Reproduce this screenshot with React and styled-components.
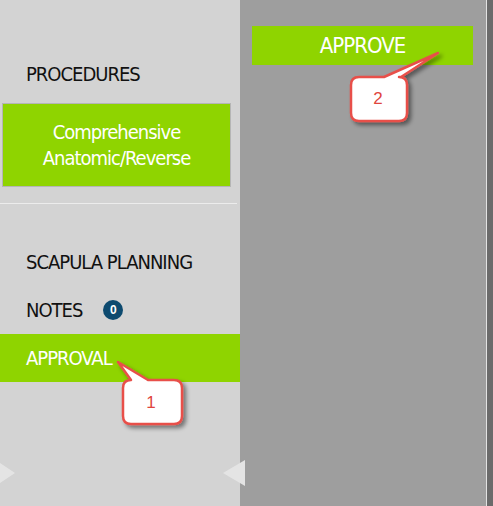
import React from "react";
import styled, { createGlobalStyle } from "styled-components";

const GlobalStyle = createGlobalStyle`
  html, body {
    margin: 0;
    padding: 0;
    width: 493px;
    height: 506px;
    overflow: hidden;
  }
  body {
    font-family: "DejaVu Sans Condensed", "Liberation Sans Narrow", sans-serif;
  }
`;

const Page = styled.div`
  position: relative;
  display: flex;
  width: 493px;
  height: 506px;
  background: #6b6b6b;
  overflow: hidden;
`;

const Sidebar = styled.div`
  flex: 0 0 240px;
  background: #d3d3d3;
  display: flex;
  flex-direction: column;
  padding-top: 59px;
  box-sizing: border-box;
`;

const Heading = styled.div`
  padding-left: 26px;
  font-size: 20px;
  line-height: 30px;
  letter-spacing: -1px;
  color: #111;
`;

const ProcedureBox = styled.div`
  margin: 14px 9px 0 2px;
  height: 84px;
  box-sizing: border-box;
  border: 1px solid #b5b5b5;
  background: #8fd400;
  color: #fff;
  display: flex;
  flex-direction: column;
  align-items: center;
  justify-content: center;
  font-size: 20px;
  line-height: 26px;
  letter-spacing: -1px;
`;

const Divider = styled.div`
  margin-top: 16px;
  width: 237px;
  height: 1px;
  background: #ececec;
`;

const NavList = styled.div`
  margin-top: 34px;
  display: flex;
  flex-direction: column;
`;

const NavItem = styled.div`
  height: 48px;
  display: flex;
  align-items: center;
  gap: 21px;
  padding-left: 26px;
  font-size: 20px;
  letter-spacing: -1px;
  color: ${(p) => (p.$active ? "#fff" : "#111")};
  background: ${(p) => (p.$active ? "#8fd400" : "transparent")};
`;

const Badge = styled.span`
  width: 20px;
  height: 20px;
  border-radius: 50%;
  background: #0d4a6f;
  color: #fff;
  font-family: "Liberation Sans", Arial, sans-serif;
  font-weight: bold;
  font-size: 12px;
  display: flex;
  align-items: center;
  justify-content: center;
  letter-spacing: 0;
`;

const Main = styled.div`
  flex: 0 0 234px;
  background: #9e9e9e;
  border-right: 1px solid #e2e2e2;
  padding: 26px 0 0 12px;
`;

const ApproveButton = styled.div`
  width: 221px;
  height: 39px;
  background: #8fd400;
  color: #fff;
  display: flex;
  align-items: center;
  justify-content: center;
  font-size: 22px;
  letter-spacing: -1px;
`;

const Overlay = styled.svg`
  position: absolute;
  left: 0;
  top: 0;
  width: 493px;
  height: 506px;
  pointer-events: none;
`;

const CalloutNumber = styled.span`
  position: absolute;
  left: ${(p) => p.$x}px;
  top: ${(p) => p.$y}px;
  transform: translate(-50%, -50%);
  font-family: "Liberation Sans", Arial, sans-serif;
  font-size: 17px;
  color: #e0453e;
`;

const Arrow = styled.div`
  position: absolute;
  left: ${(p) => p.$x}px;
  top: ${(p) => p.$y}px;
  width: 0;
  height: 0;
  border-top: ${(p) => p.$h / 2}px solid transparent;
  border-bottom: ${(p) => p.$h / 2}px solid transparent;
  ${(p) =>
    p.$dir === "right"
      ? `border-left: ${p.$w}px solid #e4e4e4;`
      : `border-right: ${p.$w}px solid #e4e4e4;`}
`;

// box corners with radius 8, tail from top edge up to the tip
const calloutPath = (tip, box, tail) => {
  const [x1, y1, x2, y2] = box;
  const r = 8;
  return `M ${tail[1]} ${y1} L ${tip[0]} ${tip[1]} L ${tail[0]} ${y1}
    L ${x1 + r} ${y1} Q ${x1} ${y1} ${x1} ${y1 + r}
    L ${x1} ${y2 - r} Q ${x1} ${y2} ${x1 + r} ${y2}
    L ${x2 - r} ${y2} Q ${x2} ${y2} ${x2} ${y2 - r}
    L ${x2} ${y1 + r} Q ${x2} ${y1} ${x2 - r} ${y1} Z`;
};

const callouts = [
  { n: 1, tip: [118, 362], box: [123, 380, 182, 424], tail: [131, 148], label: [151, 403] },
  { n: 2, tip: [438, 53], box: [351, 77, 407, 121], tail: [384, 401], label: [378, 99] },
];

const App = () => {
  return (
    <>
      <GlobalStyle />
      <Page>
        <Sidebar>
          <Heading>PROCEDURES</Heading>
          <ProcedureBox>
            <div>Comprehensive</div>
            <div>Anatomic/Reverse</div>
          </ProcedureBox>
          <Divider />
          <NavList>
            <NavItem>SCAPULA PLANNING</NavItem>
            <NavItem>
              NOTES <Badge>0</Badge>
            </NavItem>
            <NavItem $active>APPROVAL</NavItem>
          </NavList>
        </Sidebar>
        <Main>
          <ApproveButton>APPROVE</ApproveButton>
        </Main>

        <Arrow $x={0} $y={463} $w={15} $h={20} $dir="right" />
        <Arrow $x={223} $y={460} $w={22} $h={26} $dir="left" />

        <Overlay viewBox="0 0 493 506">
          <defs>
            <filter id="cs" x="-30%" y="-30%" width="160%" height="160%">
              <feDropShadow dx="3" dy="3" stdDeviation="2" floodColor="#000" floodOpacity="0.45" />
            </filter>
          </defs>
          {callouts.map((c) => (
            <path
              key={c.n}
              d={calloutPath(c.tip, c.box, c.tail)}
              fill="#fff"
              stroke="#e8504a"
              strokeWidth="2.5"
              strokeLinejoin="round"
              filter="url(#cs)"
            />
          ))}
        </Overlay>
        {callouts.map((c) => (
          <CalloutNumber key={c.n} $x={c.label[0]} $y={c.label[1]}>
            {c.n}
          </CalloutNumber>
        ))}
      </Page>
    </>
  );
};

export default App;
